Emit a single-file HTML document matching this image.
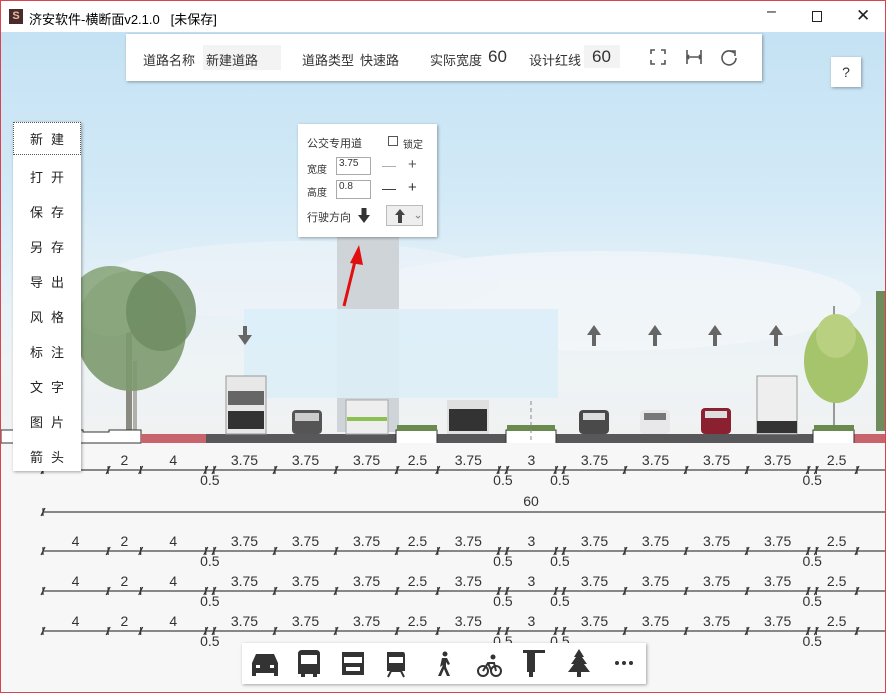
<!DOCTYPE html>
<html><head><meta charset="utf-8">
<style>
*{margin:0;padding:0;box-sizing:border-box}
body{width:886px;height:693px;overflow:hidden;font-family:"Liberation Sans","Noto Sans CJK SC",sans-serif;background:#fff;position:relative}
#win{position:absolute;left:0;top:0;width:886px;height:693px;border:1px solid #d9434f;overflow:hidden}
#title{position:absolute;left:0;top:0;width:884px;height:31px;background:#fff;font-size:13px;color:#000}
#title .t{position:absolute;left:28px;top:8px}
#logo{position:absolute;left:8px;top:8px;width:14px;height:15px;background:#4a2a2a;color:#e8c0a0;font-size:11px;font-weight:bold;text-align:center;line-height:15px}
.wb{position:absolute;top:6px;font-size:16px;color:#222}
#sky{position:absolute;left:0;top:31px;width:884px;height:410px;background:linear-gradient(#c4e2f4 0%,#d3eaf7 40%,#e6f1f7 65%,#eef3f5 80%,#f0f2f2 100%)}
#ground{position:absolute;left:0;top:441px;width:884px;height:252px;background:#f7f7f7}
.panel{position:absolute;background:#fff;box-shadow:1px 1px 3px rgba(0,0,0,.35)}
.lbl{position:absolute;font-size:13px;color:#333}
.menu div{position:absolute;left:0;width:68px;text-align:center;font-size:13px;color:#222;letter-spacing:8px;padding-left:8px}
.pop{font-size:11px;color:#333}
svg{position:absolute;left:0;top:0}
</style></head><body>
<div id="win">
<div id="sky"></div>
<div id="ground"></div>
<svg width="886" height="693" id="scene">
 <!-- clouds -->
 <ellipse cx="600" cy="300" rx="260" ry="50" fill="#f4f7f9" opacity=".7"/>
 <ellipse cx="300" cy="280" rx="200" ry="40" fill="#eef4f8" opacity=".6"/>
 <!-- left tree -->
 <rect x="125" y="330" width="6" height="100" fill="#8a8a80"/>
 <rect x="132" y="360" width="4" height="70" fill="#b0b0aa"/>
 <ellipse cx="130" cy="330" rx="55" ry="60" fill="#7c9a6e" opacity=".9"/>
 <ellipse cx="110" cy="300" rx="40" ry="35" fill="#8aa67c" opacity=".9"/>
 <ellipse cx="160" cy="310" rx="35" ry="40" fill="#6f8c62" opacity=".85"/>
 <!-- right tree -->
 <rect x="832" y="305" width="2" height="125" fill="#999"/>
 <ellipse cx="835" cy="360" rx="32" ry="42" fill="#a6c46c"/>
 <ellipse cx="835" cy="335" rx="20" ry="22" fill="#b8d080"/>
 <rect x="875" y="290" width="10" height="140" fill="#6e8c5c"/>
 <!-- pillar -->
 <rect x="336" y="236" width="62" height="195" fill="#cfd4d8"/>
 <!-- translucent rect -->
 <rect x="243" y="308" width="314" height="89" fill="#dceef8" opacity=".9"/>
 <!-- red arrow -->
 <path d="M343 305 L356 252" stroke="#e01010" stroke-width="3"/>
 <path d="M349 262 L358 244 L362 264 Z" fill="#e01010"/>
 <!-- lane arrows -->
 <g fill="#666">
  <rect x="242" y="325" width="4" height="10"/><path d="M237 334 L251 334 L244 344Z"/>
  <g id="ua"><rect x="591" y="333" width="4" height="12"/><path d="M586 334 L600 334 L593 324Z"/></g>
  <use href="#ua" x="61"/><use href="#ua" x="121"/><use href="#ua" x="182"/>
 </g>
 <!-- road -->
 <path d="M0 429 H82 V431 H108 V429 H140 V442 H0Z" fill="#fff" stroke="#333" stroke-width="1"/>
 <rect x="140" y="433" width="65" height="9" fill="#c8646c"/>
 <rect x="205" y="433" width="190" height="9" fill="#58585a"/>
 <rect x="436" y="433" width="69" height="9" fill="#58585a"/>
 <rect x="555" y="433" width="257" height="9" fill="#58585a"/>
 <rect x="853" y="433" width="33" height="9" fill="#c8646c"/>
 <path d="M395 442 V429 H436 V442 M505 442 V429 H555 V442 M812 442 V429 H853 V442" fill="#fff" stroke="#333"/>
 <rect x="396" y="424" width="40" height="6" fill="#6a8a50"/>
 <rect x="506" y="424" width="48" height="6" fill="#6a8a50"/>
 <rect x="813" y="424" width="40" height="6" fill="#6a8a50"/>
 <line x1="530" y1="400" x2="530" y2="442" stroke="#888" stroke-dasharray="4 3"/>
 <!-- vehicles -->
 <g>
  <rect x="225" y="375" width="40" height="58" fill="#e8e8e8" stroke="#999"/><rect x="227" y="390" width="36" height="14" fill="#666"/><rect x="227" y="410" width="36" height="18" fill="#333"/>
  <rect x="291" y="409" width="30" height="24" rx="4" fill="#555"/><rect x="294" y="412" width="24" height="8" fill="#ccc"/>
  <rect x="345" y="399" width="42" height="34" fill="#eee" stroke="#aaa"/><rect x="346" y="416" width="40" height="4" fill="#8cc050"/>
  <rect x="446" y="399" width="42" height="34" fill="#e0e0e0"/><rect x="448" y="408" width="38" height="22" fill="#333"/>
  <rect x="578" y="409" width="30" height="24" rx="4" fill="#4a4a4a"/><rect x="582" y="412" width="22" height="7" fill="#ddd"/>
  <rect x="639" y="409" width="30" height="24" rx="4" fill="#e8e8ea"/><rect x="643" y="412" width="22" height="7" fill="#777"/>
  <rect x="700" y="407" width="30" height="26" rx="4" fill="#8a2030"/><rect x="704" y="410" width="22" height="7" fill="#ddd"/>
  <rect x="756" y="375" width="40" height="58" fill="#eee" stroke="#999"/><rect x="756" y="420" width="40" height="12" fill="#333"/>
 </g>
 <g id="dims" font-family="Liberation Sans" font-size="14" fill="#333" text-anchor="middle"></g>
</svg>

<div id="title"><div id="logo">S</div><div class="t">济安软件-横断面v2.1.0&nbsp;&nbsp;&nbsp;[未保存]</div>
<div class="wb" style="left:766px;top:2px">–</div>
<div style="position:absolute;left:811px;top:10px;width:10px;height:11px;border:1px solid #222"></div>
<div class="wb" style="left:855px;top:5px;font-size:17px">✕</div></div>

<div class="panel" style="left:125px;top:33px;width:636px;height:47px">
 <div class="lbl" style="left:17px;top:16px">道路名称</div>
 <div style="position:absolute;left:77px;top:11px;width:78px;height:25px;background:#f3f3f3"></div>
 <div class="lbl" style="left:80px;top:16px">新建道路</div>
 <div class="lbl" style="left:176px;top:16px">道路类型</div>
 <div class="lbl" style="left:234px;top:16px">快速路</div>
 <div class="lbl" style="left:304px;top:16px">实际宽度</div>
 <div class="lbl" style="left:362px;top:13px;font-size:17px">60</div>
 <div class="lbl" style="left:403px;top:16px">设计红线</div>
 <div style="position:absolute;left:458px;top:11px;width:36px;height:23px;background:#f3f3f3"></div>
 <div class="lbl" style="left:466px;top:13px;font-size:17px">60</div>
 <svg style="left:524px;top:15px" width="90" height="18" fill="none" stroke="#555" stroke-width="1.6">
  <path d="M1 5V1H5M11 1H15V5M15 11V15H11M5 15H1V11"/>
  <path d="M37 1V15M51 1V15M37 8H51M39 6L37 8L39 10M49 6L51 8L49 10"/>
  <path d="M84 4A7 7 0 1 0 86 9"/><path d="M80 2H85V7"/>
 </svg>
</div>
<div class="panel" style="left:830px;top:56px;width:30px;height:30px;font-size:14px;text-align:center;line-height:30px;color:#333">?</div>

<div class="panel menu" style="left:12px;top:121px;width:68px;height:349px">
 <div style="top:0;height:33px;line-height:33px;border:1px dotted #555">新建</div>
 <div style="top:45px">打开</div><div style="top:80px">保存</div><div style="top:115px">另存</div>
 <div style="top:150px">导出</div><div style="top:185px">风格</div><div style="top:220px">标注</div>
 <div style="top:255px">文字</div><div style="top:290px">图片</div><div style="top:325px">箭头</div>
</div>

<div class="panel pop" style="left:297px;top:123px;width:139px;height:113px">
 <div style="position:absolute;left:9px;top:11px">公交专用道</div>
 <div style="position:absolute;left:90px;top:12px;width:10px;height:10px;border:1px solid #555"></div>
 <div style="position:absolute;left:105px;top:12px;font-size:10px">锁定</div>
 <div style="position:absolute;left:9px;top:37px;font-size:10px">宽度</div>
 <div style="position:absolute;left:38px;top:33px;width:35px;height:18px;border:1px solid #aaa;padding-left:2px;font-size:10px">3.75</div>
 <div style="position:absolute;left:84px;top:33px;font-size:14px;color:#aaa">—</div>
 <div style="position:absolute;left:110px;top:32px;font-size:15px;color:#555">+</div>
 <div style="position:absolute;left:9px;top:60px;font-size:10px">高度</div>
 <div style="position:absolute;left:38px;top:56px;width:35px;height:19px;border:1px solid #aaa;padding-left:2px;font-size:10px">0.8</div>
 <div style="position:absolute;left:84px;top:56px;font-size:14px;color:#333">—</div>
 <div style="position:absolute;left:110px;top:55px;font-size:15px;color:#333">+</div>
 <div style="position:absolute;left:9px;top:85px">行驶方向</div>
 <svg style="left:60px;top:84px" width="12" height="16"><rect x="3.5" y="0" width="5" height="8" fill="#333"/><path d="M0 7H12L6 15Z" fill="#333"/></svg>
 <div style="position:absolute;left:88px;top:81px;width:37px;height:21px;border:1px solid #bbb;background:#eee"></div>
 <svg style="left:96px;top:84px" width="30" height="16"><rect x="4" y="6" width="4" height="9" fill="#444"/><path d="M1 7H11L6 1Z" fill="#444"/><path d="M22 8L24 10L26 8" stroke="#888" fill="none"/></svg>
</div>

<div class="panel" style="left:241px;top:642px;width:404px;height:41px">
 <svg width="404" height="41" fill="#333">
  <path d="M10 20 L14 11 H32 L36 20 V33 H32 V30 H14 V33 H10Z"/><rect x="14" y="22" width="4" height="3" fill="#fff"/><rect x="28" y="22" width="4" height="3" fill="#fff"/>
  <path d="M56 11 Q56 7 60 7 H74 Q78 7 78 11 V31 H75 V34 H71 V31 H63 V34 H59 V31 H56Z"/><rect x="59" y="12" width="16" height="9" fill="#fff"/>
  <rect x="100" y="9" width="22" height="23"/><rect x="102" y="14" width="18" height="6" fill="#fff"/><rect x="104" y="24" width="14" height="4" fill="#fff"/>
  <path d="M145 9 H161 Q163 9 163 12 V28 H145 V12Z"/><rect x="147" y="14" width="14" height="6" fill="#fff"/><path d="M146 34 L149 28 H159 L162 34" stroke="#333" stroke-width="2" fill="none"/>
  <circle cx="203" cy="11" r="2.5"/><path d="M200 15 L205 15 L208 21 L206 22 L204 19 L204 24 L208 33 L205 33 L202 26 L199 33 L196 33 L201 22 L198 24 Z"/>
  <g fill="none" stroke="#333" stroke-width="2"><circle cx="241" cy="28" r="5"/><circle cx="254" cy="28" r="5"/><path d="M241 28 L246 20 L252 20 L254 28 M246 20 L249 27"/></g><circle cx="251" cy="14" r="2.5"/>
  <rect x="281" y="7" width="22" height="3"/><rect x="285" y="10" width="8" height="19"/><rect x="287" y="29" width="4" height="5"/>
  <path d="M337 6 L342 14 H340 L345 21 H342 L348 29 H339 V34 H335 V29 H326 L332 21 H329 L334 14 H332Z"/>
  <circle cx="375" cy="20" r="2"/><circle cx="382" cy="20" r="2"/><circle cx="389" cy="20" r="2"/>
 </svg>
</div>
</div>
<script>
var segs=[4,2,4,0.5,3.75,3.75,3.75,2.5,3.75,0.5,3,0.5,3.75,3.75,3.75,3.75,0.5,2.5,4,2,4];
var s=16.28,x0=42,g=document.getElementById('dims'),h='';
function row(ly,ty,labels){
 h+='<line x1="'+x0+'" y1="'+ly+'" x2="886" y2="'+ly+'" stroke="#444" stroke-width="1.3"/>';
 var x=x0;h+=tick(x,ly);
 segs.forEach(function(w){var nx=x+w*s;
  if(labels){ if(w==0.5) h+='<text x="'+((x+nx)/2)+'" y="'+(ly+15)+'">0.5</text>'; else h+='<text x="'+((x+nx)/2)+'" y="'+(ly-5)+'">'+w+'</text>';}
  h+=tick(nx,ly);x=nx;});
}
function tick(x,y){return '<path d="M'+(x-2)+' '+(y+4)+' L'+(x+2)+' '+(y-4)+' M'+x+' '+(y-4)+' V'+(y+4)+'" stroke="#333" stroke-width="1.2"/>';}
row(469,0,1);
h+='<line x1="'+x0+'" y1="511" x2="886" y2="511" stroke="#444" stroke-width="1.3"/>'+tick(x0,511)+'<text x="530" y="505">60</text>';
row(550,0,1);row(590,0,1);row(630,0,1);
g.innerHTML=h;
</script>
</body></html>
